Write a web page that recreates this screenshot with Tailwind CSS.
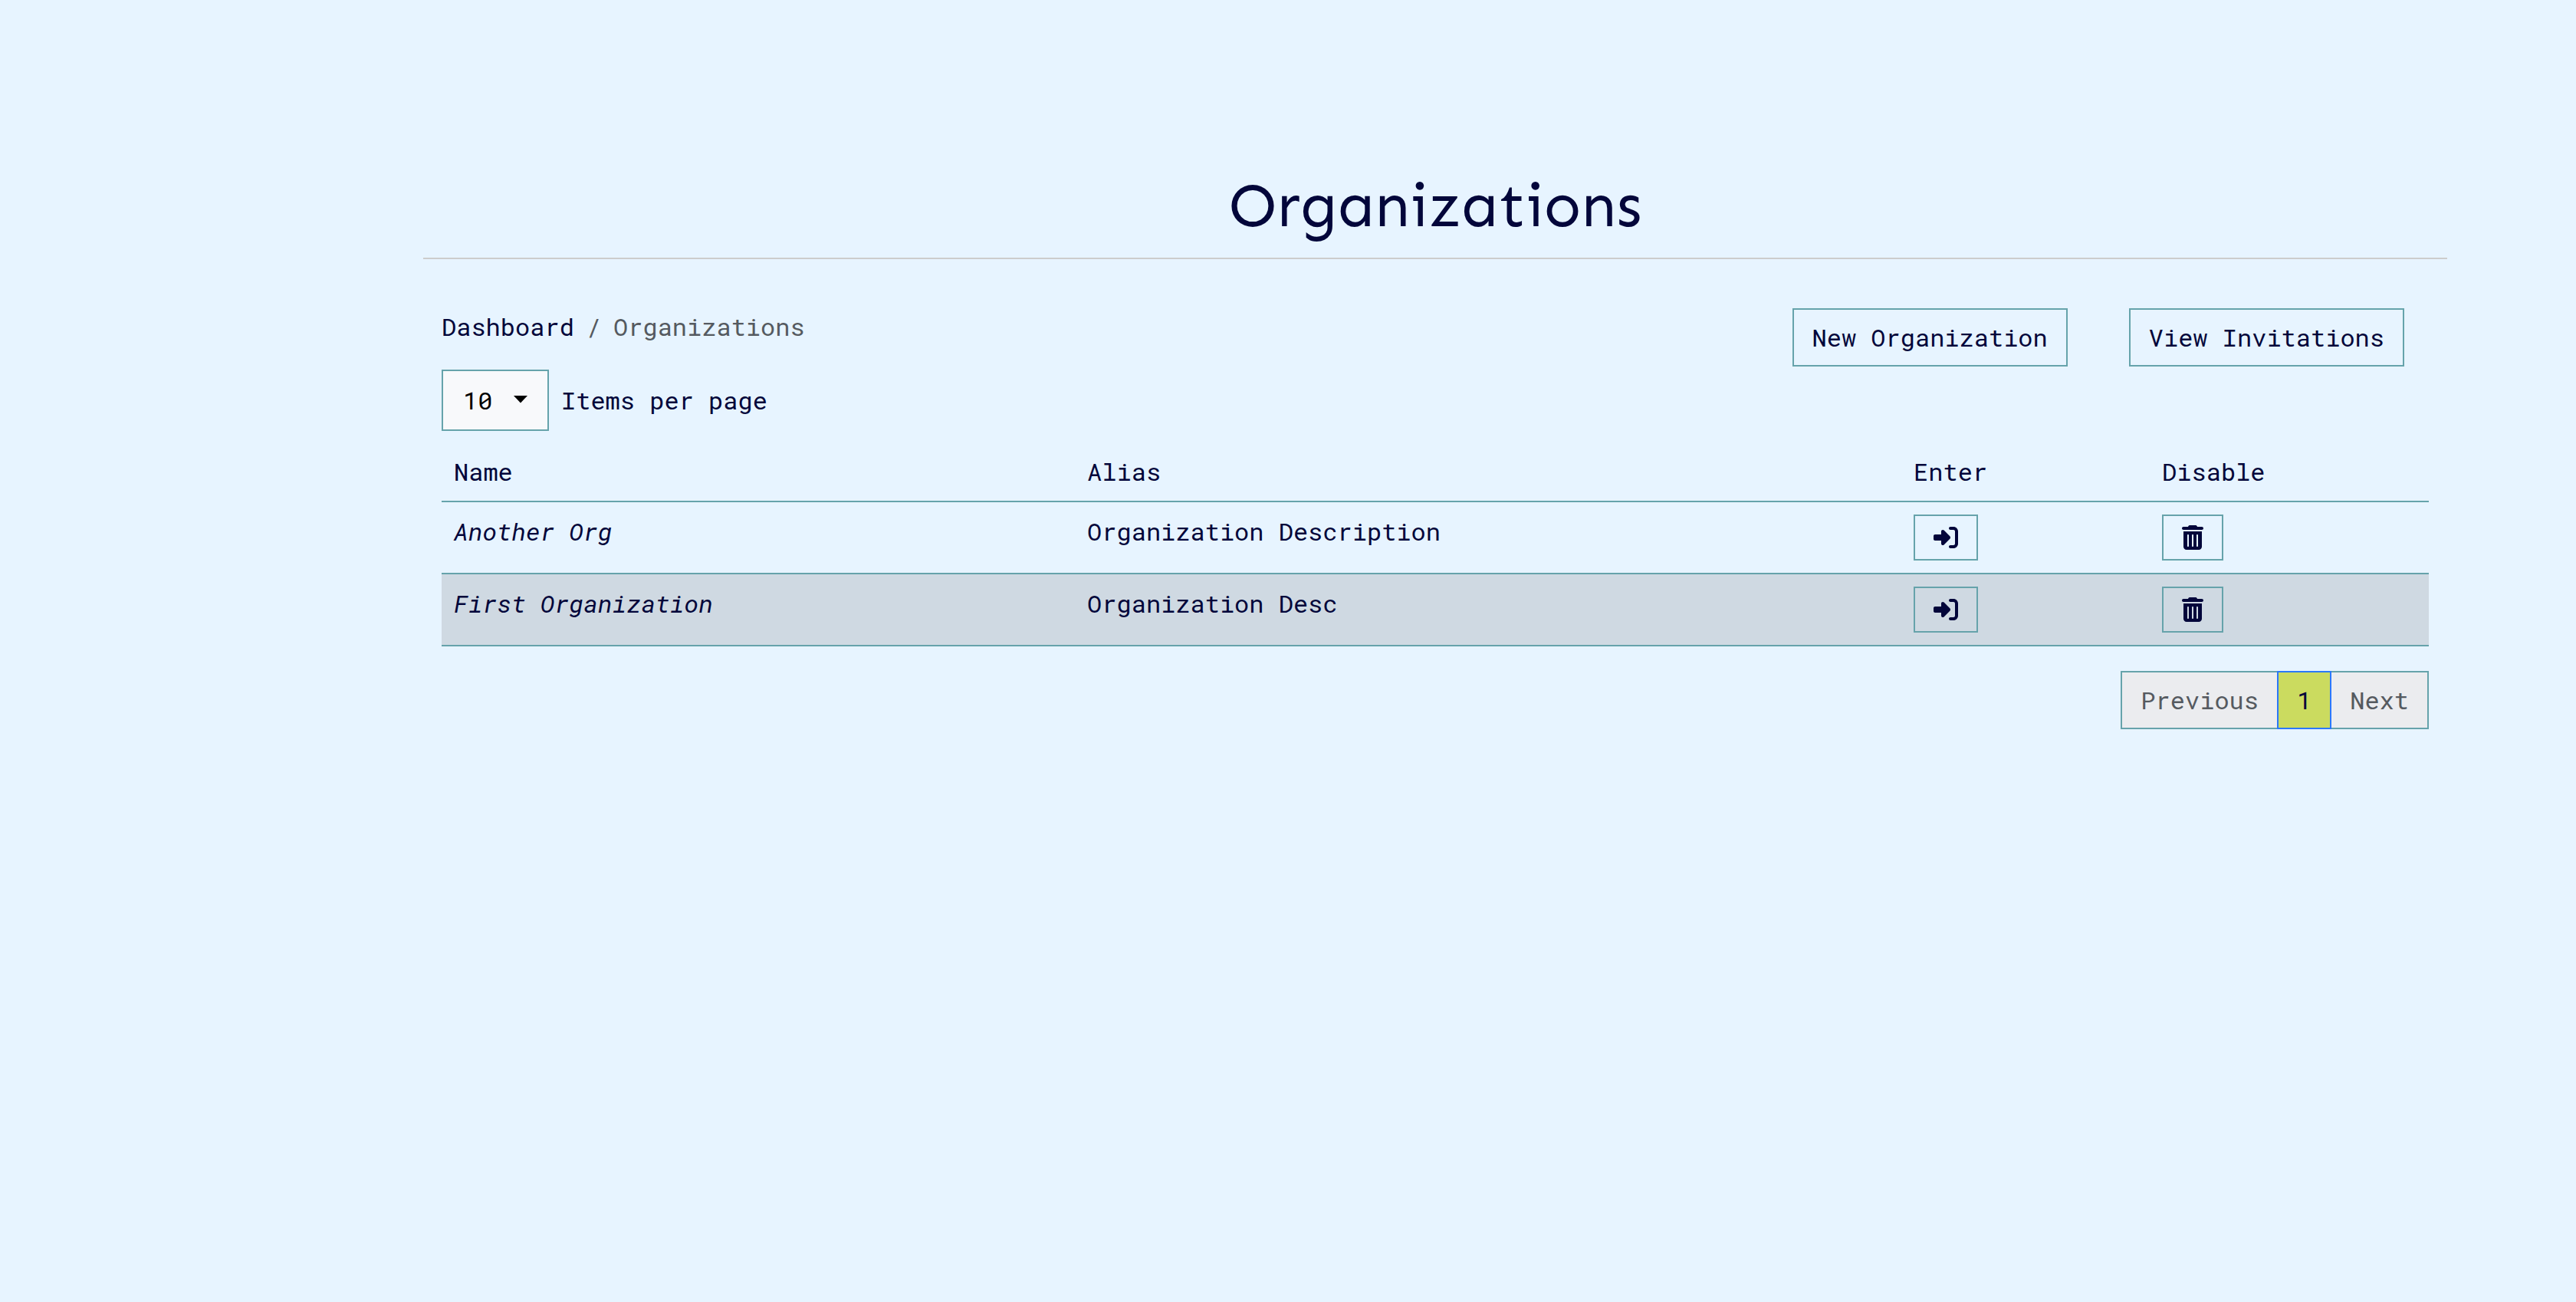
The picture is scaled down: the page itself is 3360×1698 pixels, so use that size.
<!DOCTYPE html>
<html lang="en">
<head>
<meta charset="utf-8">
<title>Organizations</title>
<script src="https://cdn.jsdelivr.net/npm/@tailwindcss/browser@4"></script>
</head>
<body class="min-h-screen bg-[#e7f4ff] font-['Roboto_Mono','DejaVu_Sans_Mono',monospace] text-[32px] leading-[48px] text-[#03063a]">
<svg class="hidden">
  <symbol id="enter" viewBox="0 0 512 512"><path d="M217.9 105.9L340.7 228.7c7.2 7.2 11.3 17.1 11.3 27.3s-4.1 20.1-11.3 27.3L217.9 406.1c-6.4 6.4-15 9.9-24 9.9c-18.7 0-33.9-15.2-33.9-33.9l0-62.1L32 320c-17.7 0-32-14.3-32-32l0-64c0-17.7 14.3-32 32-32l128 0 0-62.1c0-18.7 15.2-33.9 33.9-33.9c9 0 17.6 3.6 24 9.9zM352 416l64 0c17.7 0 32-14.3 32-32l0-256c0-17.7-14.3-32-32-32l-64 0c-17.7 0-32-14.3-32-32s14.3-32 32-32l64 0c53 0 96 43 96 96l0 256c0 53-43 96-96 96l-64 0c-17.7 0-32-14.3-32-32s14.3-32 32-32z"/></symbol>
  <symbol id="trash" viewBox="0 0 448 512"><path d="M135.2 17.7C140.6 6.8 151.7 0 163.8 0L284.2 0c12.1 0 23.2 6.8 28.6 17.7L320 32l96 0c17.7 0 32 14.3 32 32s-14.3 32-32 32L32 96C14.3 96 0 81.7 0 64S14.3 32 32 32l96 0 7.2-14.3zM32 128l384 0 0 320c0 35.3-28.7 64-64 64L96 512c-35.3 0-64-28.7-64-64l0-320zm96 64c-8.8 0-16 7.2-16 16l0 224c0 8.8 7.2 16 16 16s16-7.2 16-16l0-224c0-8.8-7.2-16-16-16zm96 0c-8.8 0-16 7.2-16 16l0 224c0 8.8 7.2 16 16 16s16-7.2 16-16l0-224c0-8.8-7.2-16-16-16zm96 0c-8.8 0-16 7.2-16 16l0 224c0 8.8 7.2 16 16 16s16-7.2 16-16l0-224c0-8.8-7.2-16-16-16z"/></symbol>
</svg>
<main class="pt-[220px] pr-[168px] pl-[552px]">
  <h1 class="border-b-2 border-[#cccccc] pb-5 text-center font-['Sen',Lato,sans-serif] text-[80px] leading-[96px]">Organizations</h1>
  <div class="px-6 pt-16">
    <div class="flex items-start justify-between">
      <div>
        <nav aria-label="Breadcrumb" class="flex gap-4">
          <a href="#">Dashboard</a>
          <span class="text-[#555a60]">/</span>
          <span class="text-[#555a60]" aria-current="page">Organizations</span>
        </nav>
        <div class="mt-8 flex items-center gap-4">
          <div class="relative">
            <select id="per-page" class="block w-[140px] appearance-none border-2 border-[#66a3ab] bg-[#f8f9fb] py-[14px] pl-[26px] text-black">
              <option>10</option>
            </select>
            <svg class="pointer-events-none absolute top-[34px] right-7 h-[10px] w-[18px]" viewBox="0 0 18 10"><path d="M0 0h18L9 9.500z"/></svg>
          </div>
          <label for="per-page">Items per page</label>
        </div>
      </div>
      <div class="mr-8 flex gap-20">
        <button class="border-2 border-[#66a3ab] px-6 py-3">New Organization</button>
        <button class="border-2 border-[#66a3ab] px-6 py-3">View Invitations</button>
      </div>
    </div>
    <table class="mt-[15px] w-full table-fixed text-left">
      <thead>
        <tr class="border-b-2 border-[#66a3ab] leading-[44px]">
          <th class="w-[31.87%] p-4 font-normal">Name</th>
          <th class="w-[41.59%] p-4 font-normal">Alias</th>
          <th class="w-[12.5%] p-4 font-normal">Enter</th>
          <th class="p-4 font-normal">Disable</th>
        </tr>
      </thead>
      <tbody class="align-top leading-[44px]">
        <tr class="border-b-2 border-[#66a3ab]">
          <td class="p-4 italic">Another Org</td>
          <td class="p-4">Organization Description</td>
          <td class="p-4"><button aria-label="Enter Another Org" class="block border-2 border-[#66a3ab] px-6 py-3"><svg class="size-8 fill-current"><use href="#enter"/></svg></button></td>
          <td class="p-4"><button aria-label="Disable Another Org" class="block border-2 border-[#66a3ab] px-6 py-3"><svg class="h-8 w-7 fill-current"><use href="#trash"/></svg></button></td>
        </tr>
        <tr class="border-b-2 border-[#66a3ab] bg-[#cfd9e2]">
          <td class="p-4 italic">First Organization</td>
          <td class="p-4">Organization Desc</td>
          <td class="p-4"><button aria-label="Enter First Organization" class="block border-2 border-[#66a3ab] px-6 py-3"><svg class="size-8 fill-current"><use href="#enter"/></svg></button></td>
          <td class="p-4"><button aria-label="Disable First Organization" class="block border-2 border-[#66a3ab] px-6 py-3"><svg class="h-8 w-7 fill-current"><use href="#trash"/></svg></button></td>
        </tr>
      </tbody>
    </table>
    <nav aria-label="Pagination" class="mt-8 flex justify-end">
      <button disabled class="border-2 border-[#66a3ab] bg-[#ebecef] px-6 py-3 text-[#555a60]">Previous</button>
      <button aria-current="page" class="z-10 -mx-0.5 border-2 border-[#2b78fe] bg-[#cbdb5f] px-6 py-3">1</button>
      <button disabled class="border-2 border-[#66a3ab] bg-[#ebecef] px-6 py-3 text-[#555a60]">Next</button>
    </nav>
  </div>
</main>
</body>
</html>
